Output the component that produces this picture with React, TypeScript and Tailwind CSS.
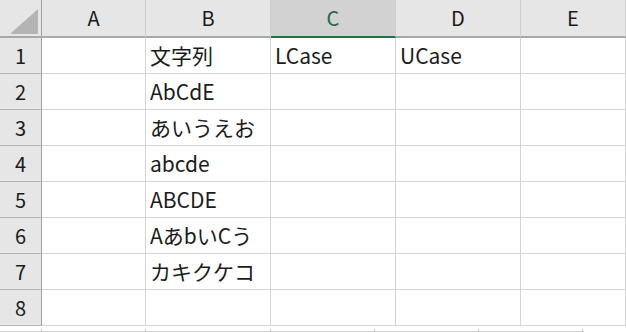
const columns = [
  { label: "A", width: "w-[104px]" },
  { label: "B", width: "w-[125px]" },
  { label: "C", width: "w-[125px]", selected: true },
  { label: "D", width: "w-[125px]" },
  { label: "E", width: "w-[105px]" },
];

const rows: string[][] = [
  ["", "文字列", "LCase", "UCase", ""],
  ["", "AbCdE", "", "", ""],
  ["", "あいうえお", "", "", ""],
  ["", "abcde", "", "", ""],
  ["", "ABCDE", "", "", ""],
  ["", "AあbいCう", "", "", ""],
  ["", "カキクケコ", "", "", ""],
  ["", "", "", "", ""],
];

// little marks on the lower edge line
const ticks = ["left-[41px]", "left-[145px]", "left-[270px]", "left-[374px]", "left-[478px]", "left-[582px]"];

const font = {
  fontFamily: '"Noto Sans CJK JP", "Noto Sans", sans-serif',
};

export default function App() {
  return (
    <div className="w-[626px] h-[332px] overflow-hidden bg-white text-[#1b1b1b]" style={font}>
      {/* column headers */}
      <div className="flex h-[38px]">
        <div className="w-[42px] shrink-0 bg-[#e6e6e6] border-r border-b-2 border-r-[#a0a0a0] border-b-[#a8a8a8] flex items-end justify-end pr-[3px] pb-[2px]">
          <svg width="28" height="25" viewBox="0 0 28 25">
            <polygon points="28,0 28,25 0,25" fill="#b4b4b4" />
          </svg>
        </div>
        {columns.map((c) => (
          <div
            key={c.label}
            className={`${c.width} shrink-0 flex items-center justify-center text-[20px] border-r border-r-[#cfcfcf] ${
              c.selected
                ? "bg-[#d2d2d2] border-b-2 border-b-[#217346] text-[#1e6b41]"
                : "bg-[#e6e6e6] border-b-2 border-b-[#a8a8a8]"
            }`}
          >
            {c.label}
          </div>
        ))}
      </div>

      {/* rows */}
      {rows.map((cells, i) => (
        <div key={i} className="flex h-[36px]">
          <div className="w-[42px] shrink-0 bg-[#e6e6e6] border-r border-b border-r-[#a0a0a0] border-b-[#b4b4b4] flex items-center justify-center text-[20px]">
            {i + 1}
          </div>
          {cells.map((v, j) => (
            <div
              key={j}
              className={`${columns[j].width} shrink-0 border-r border-b border-[#d4d4d4] flex items-end pl-[4px] pb-[3px] text-[21px] leading-[30px] whitespace-nowrap`}
            >
              {v}
            </div>
          ))}
        </div>
      ))}

      {/* lower edge */}
      <div className="relative h-[6px]">
        <div className="absolute left-0 bottom-0 w-[584px] border-b border-[#cfcfcf]" />
        {ticks.map((t) => (
          <span key={t} className={`absolute ${t} bottom-0 h-[3px] border-l border-[#c4c4c4]`} />
        ))}
      </div>
    </div>
  );
}
